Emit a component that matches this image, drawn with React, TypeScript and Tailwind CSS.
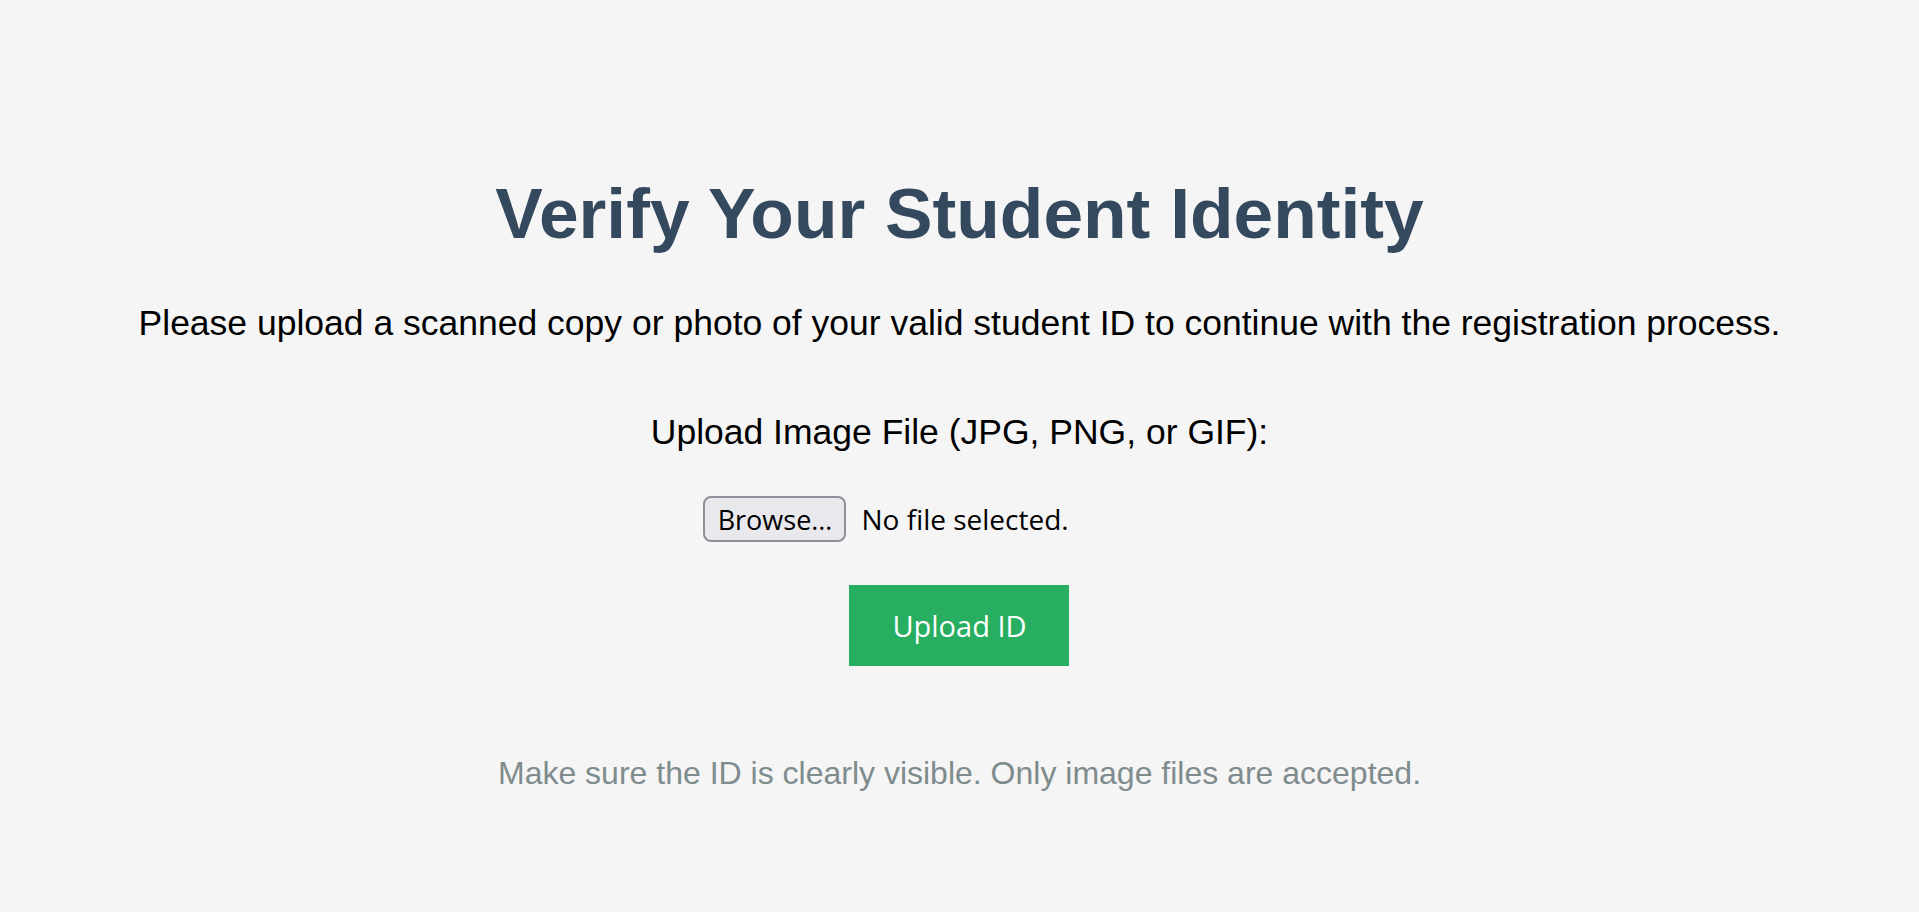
import React from "react";

export default function App() {
  return (
    <div className="min-h-[912px] w-full bg-[#f5f5f5] flex flex-col items-center text-center pt-[172px]" style={{ fontFamily: '"Liberation Sans", Arial, sans-serif' }}>
      <h1 className="text-[71.3px] leading-[83px] font-bold text-[#34495e]">
        Verify Your Student Identity
      </h1>
      <p className="mt-[48px] text-[35.5px] leading-[41px] text-black">
        Please upload a scanned copy or photo of your valid student ID to continue with the registration process.
      </p>
      <form className="flex flex-col items-center" onSubmit={(e) => e.preventDefault()}>
        <label className="mt-[67.5px] text-[35.5px] leading-[41px] text-black">
          Upload Image File (JPG, PNG, or GIF):
        </label>
        <div className="mt-[43.5px] w-[512px] flex items-center" style={{ fontFamily: '"Open Sans", "Noto Sans", sans-serif' }}>
          <button type="button" className="h-[46px] w-[143px] rounded-[8px] border-2 border-[#8f8f9d] bg-[#e9e9ed] text-[27px] leading-none text-black flex items-center justify-center">
            Browse…
          </button>
          <span className="ml-[15px] text-[28px] text-black">No file selected.</span>
        </div>
        <button type="submit" className="mt-[43px] h-[81px] w-[220px] bg-[#27ae60] text-white text-[29px] flex items-center justify-center" style={{ fontFamily: '"Open Sans", "Noto Sans", sans-serif' }}>
          Upload ID
        </button>
      </form>
      <p className="mt-[89px] text-[32px] leading-[37px] text-[#7f8c8d]">
        Make sure the ID is clearly visible. Only image files are accepted.
      </p>
    </div>
  );
}
